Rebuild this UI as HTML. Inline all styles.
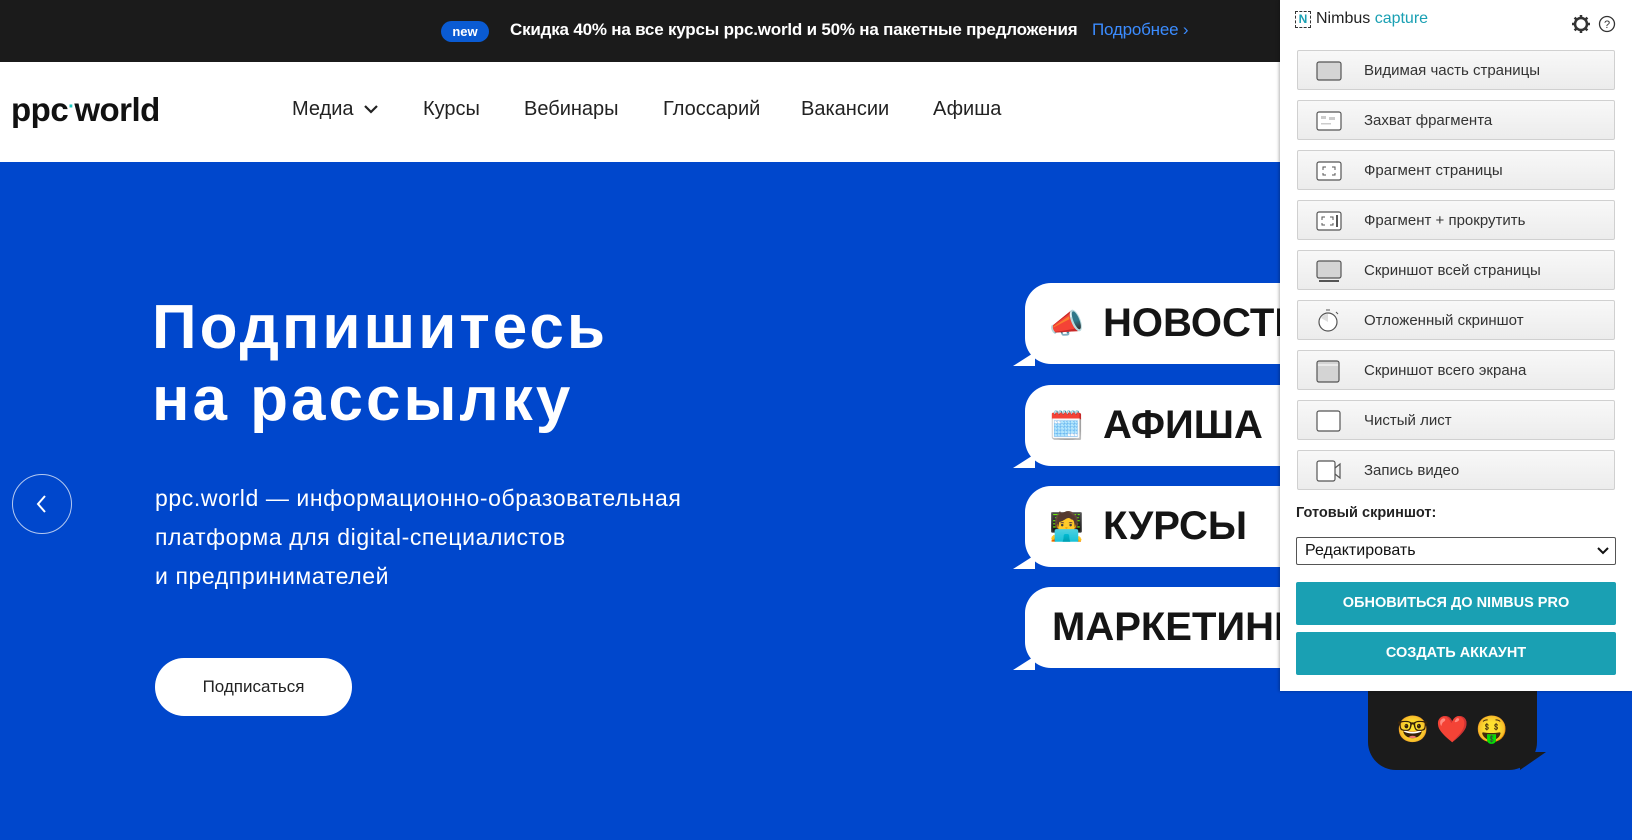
<!DOCTYPE html>
<html><head><meta charset="utf-8"><style>
*{margin:0;padding:0;box-sizing:border-box}
body{width:1632px;height:840px;overflow:hidden;position:relative;font-family:"Liberation Sans","DejaVu Sans",sans-serif;background:#0047cc}
.abs{position:absolute}
.top{left:0;top:0;width:1632px;height:62px;background:#1b1b1b}
.nav{left:0;top:62px;width:1632px;height:100px;background:#fff}
.navi{top:98px;font-size:20px;color:#222}
.bub{left:1025px;width:300px;height:81px;background:#fff;border-radius:26px 0 0 26px}
.bub:before{content:"";position:absolute;left:-12px;bottom:-2px;border-left:22px solid transparent;border-bottom:14px solid #fff}
.bt{position:absolute;top:18px;font-size:40px;font-weight:bold;color:#151515;white-space:nowrap}
.em{position:absolute;left:24px;top:24px;font-size:28px}
.panel{left:1280px;top:0;width:352px;height:691px;background:#fff;box-shadow:-1px 0 3px rgba(0,0,0,.3)}
.btn{position:absolute;left:17px;width:318px;height:40px;border:1px solid #d0d0d0;border-radius:2px;background:linear-gradient(#f8f8f8,#ececec);font-size:15px;color:#333}
.btn span{position:absolute;left:66px;top:11px}
.btn svg{position:absolute;left:18px;top:9px}
.teal{position:absolute;left:16px;width:320px;height:43px;background:#1aa0b3;color:#fff;font-weight:bold;font-size:14.5px;text-align:center;line-height:43px;border-radius:2px}
</style></head><body>
<div class="abs top"></div>
<div class="abs" style="left:441px;top:21px;width:48px;height:21px;border-radius:11px;background:#0a5bd3;color:#fff;font-size:13px;font-weight:bold;text-align:center;line-height:21px">new</div>
<div class="abs" style="left:510px;top:20px;font-size:17px;font-weight:bold;color:#fff;white-space:nowrap;letter-spacing:-0.2px">Скидка 40% на все курсы ppc.world и 50% на пакетные предложения <span style="color:#3b8cff;font-weight:normal;margin-left:10px">Подробнее ›</span></div>
<div class="abs nav"></div>
<div class="abs" style="left:11px;top:91px;font-size:33px;font-weight:bold;color:#111;letter-spacing:-0.5px">ppc<span style="color:#1cc8c0;font-size:20px;vertical-align:8px">·</span>world</div>
<div class="abs navi" style="left:292px">Медиа <svg width="16" height="12" viewBox="0 0 16 12" style="margin-left:4px"><path d="M2 3l6 6 6-6" stroke="#222" stroke-width="2.2" fill="none"/></svg></div>
<div class="abs navi" style="left:423px">Курсы</div>
<div class="abs navi" style="left:524px">Вебинары</div>
<div class="abs navi" style="left:663px">Глоссарий</div>
<div class="abs navi" style="left:801px">Вакансии</div>
<div class="abs navi" style="left:933px">Афиша</div>

<div class="abs" style="left:152px;top:292px;font-size:62px;font-weight:bold;color:#fff;line-height:72px;letter-spacing:3px;white-space:nowrap">Подпишитесь<br>на рассылку</div>
<div class="abs" style="left:155px;top:479px;font-size:23px;color:#fff;line-height:39px;letter-spacing:0.6px;white-space:nowrap">ppc.world — информационно-образовательная<br>платформа для digital-специалистов<br>и предпринимателей</div>
<div class="abs" style="left:155px;top:658px;width:197px;height:58px;border-radius:29px;background:#fff;color:#222;font-size:17px;text-align:center;line-height:58px">Подписаться</div>
<div class="abs" style="left:12px;top:474px;width:60px;height:60px;border-radius:50%;border:1px solid rgba(255,255,255,.7)"><svg width="60" height="60" style="position:absolute;left:-1px;top:-1px"><path d="M33 22l-7 8 7 8" stroke="#fff" stroke-width="2" fill="none"/></svg></div>

<div class="abs bub" style="top:283px"><span class="em">📣</span><span class="bt" style="left:78px">НОВОСТИ</span></div>
<div class="abs bub" style="top:385px"><span class="em">🗓️</span><span class="bt" style="left:78px">АФИША</span></div>
<div class="abs bub" style="top:486px"><span class="em">🧑‍💻</span><span class="bt" style="left:78px">КУРСЫ</span></div>
<div class="abs bub" style="top:587px"><span class="bt" style="left:27px">МАРКЕТИНГ</span></div>

<div class="abs" style="left:1368px;top:688px;width:169px;height:82px;background:#1b1b1b;border-radius:0 0 28px 28px;font-size:26px;text-align:center;line-height:82px">🤓 ❤️ 🤑</div>
<div class="abs" style="left:1520px;top:752px;border-left:26px solid #1b1b1b;border-bottom:18px solid transparent"></div>

<div class="abs panel">
 <div style="position:absolute;left:15px;top:11px;width:16px;height:17px;border:1.5px dashed #333;font-size:12px;font-weight:bold;color:#1aa0b3;text-align:center;line-height:14px">N</div>
 <div style="position:absolute;left:36px;top:10px;font-size:16px;color:#222">Nimbus <span style="color:#1aa0b3">capture</span></div>
 <svg style="position:absolute;left:290px;top:13px" width="22" height="22" viewBox="0 0 22 22"><circle cx="11" cy="11" r="6" fill="none" stroke="#333" stroke-width="2.5"/><path d="M11 2v4M11 16v4M2 11h4M16 11h4M4.6 4.6l2.8 2.8M14.6 14.6l2.8 2.8M4.6 17.4l2.8-2.8M14.6 7.4l2.8-2.8" stroke="#333" stroke-width="2.5"/></svg>
 <svg style="position:absolute;left:318px;top:15px" width="18" height="18" viewBox="0 0 18 18"><circle cx="9" cy="9" r="7.5" fill="none" stroke="#333" stroke-width="1.3"/><text x="9" y="13" font-size="11" text-anchor="middle" fill="#333" font-family="Liberation Sans">?</text></svg>
 <div class="btn" style="top:50px"><svg width="26" height="22"><rect x="1" y="2" width="24" height="18" rx="2" fill="#d4d4d4" stroke="#555" stroke-width="1.2"/></svg><span>Видимая часть страницы</span></div>
 <div class="btn" style="top:100px"><svg width="26" height="22"><rect x="1" y="2" width="24" height="18" rx="2" fill="#fff" stroke="#555" stroke-width="1.2"/><rect x="5" y="6" width="5" height="3" fill="#ccc"/><rect x="13" y="7" width="6" height="3" fill="#ccc"/><rect x="5" y="13" width="10" height="1.5" fill="#ccc"/></svg><span>Захват фрагмента</span></div>
 <div class="btn" style="top:150px"><svg width="26" height="22"><rect x="1" y="2" width="24" height="18" rx="2" fill="#fff" stroke="#555" stroke-width="1.2"/><path d="M7 10V7h3M16 7h3v3M7 13v2h3M16 15h3v-2" stroke="#555" fill="none"/></svg><span>Фрагмент страницы</span></div>
 <div class="btn" style="top:200px"><svg width="26" height="22"><rect x="1" y="2" width="24" height="18" rx="2" fill="#fff" stroke="#555" stroke-width="1.2"/><path d="M6 10V7h3M14 7h3v3M6 13v2h3M14 15h3v-2" stroke="#555" fill="none"/><rect x="20" y="5" width="2" height="12" fill="#555"/></svg><span>Фрагмент + прокрутить</span></div>
 <div class="btn" style="top:250px"><svg width="26" height="22"><rect x="1" y="1" width="24" height="17" rx="2" fill="#d4d4d4" stroke="#555" stroke-width="1.2"/><rect x="3" y="20" width="20" height="2" fill="#555"/></svg><span>Скриншот всей страницы</span></div>
 <div class="btn" style="top:300px"><svg width="26" height="24" style="top:7px"><circle cx="12" cy="14" r="9" fill="#fff" stroke="#555" stroke-width="1.2"/><path d="M12 14V6A8 8 0 0 0 5 10z" fill="#ddd"/><path d="M10 2h4M20 4l2 2" stroke="#555"/></svg><span>Отложенный скриншот</span></div>
 <div class="btn" style="top:350px"><svg width="26" height="24"><rect x="1" y="1" width="22" height="21" rx="2" fill="#d4d4d4" stroke="#555" stroke-width="1.2"/><path d="M2 5h20" stroke="#fff"/></svg><span>Скриншот всего экрана</span></div>
 <div class="btn" style="top:400px"><svg width="26" height="22"><rect x="1" y="1" width="23" height="20" rx="2" fill="#fff" stroke="#555" stroke-width="1.2"/></svg><span>Чистый лист</span></div>
 <div class="btn" style="top:450px"><svg width="26" height="22"><rect x="1" y="1" width="18" height="20" rx="2" fill="#fff" stroke="#555" stroke-width="1.2"/><path d="M19 8l5-4v14l-5-4" fill="none" stroke="#555" stroke-width="1.2"/></svg><span>Запись видео</span></div>
 <div style="position:absolute;left:16px;top:505px;font-size:14.5px;font-weight:bold;color:#222">Готовый скриншот:</div>
 <div style="position:absolute;left:16px;top:537px;width:320px;height:28px;border:1px solid #555;border-radius:2px;font-size:16px;color:#111;padding:4px 8px">Редактировать<svg style="position:absolute;right:6px;top:9px" width="12" height="8"><path d="M1 1l5 5 5-5" stroke="#111" stroke-width="2" fill="none"/></svg></div>
 <div class="teal" style="top:582px">ОБНОВИТЬСЯ ДО NIMBUS PRO</div>
 <div class="teal" style="top:632px">СОЗДАТЬ АККАУНТ</div>
</div>
</body></html>
